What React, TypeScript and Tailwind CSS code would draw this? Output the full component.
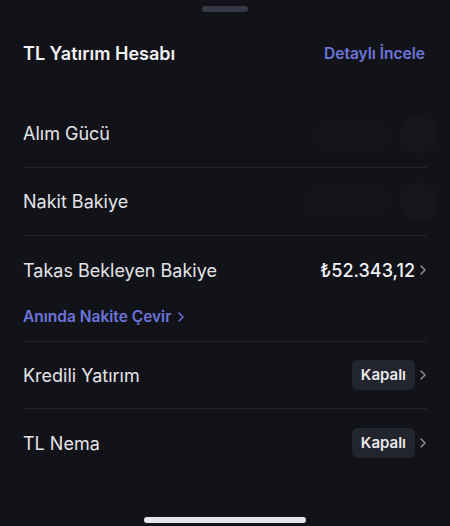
import React from 'react';

const Chevron = () => (
  <svg width="8" height="12" viewBox="0 0 8 12" fill="none" className="ml-1 shrink-0">
    <path d="M2 2l4 4-4 4" stroke="#8b8d97" strokeWidth="1.5" strokeLinecap="round" strokeLinejoin="round" />
  </svg>
);

// masked amount, almost invisible in the screenshot
const HiddenValue = ({ width }: { width: number }) => (
  <div className="-mr-[12px] flex items-center gap-3">
    <div className="h-[30px] rounded-md bg-white/[0.012] blur-[3px]" style={{ width }} />
    <div className="h-[38px] w-[40px] rounded-full bg-white/[0.018] blur-[3px]" />
  </div>
);

const Pill = () => (
  <div className="flex items-center">
    <span className="rounded-md bg-[#23252e] px-[9px] py-[4px] text-[15px] font-semibold text-[#e8e8ec]">Kapalı</span>
    <Chevron />
  </div>
);

export default function App() {
  const rowLabel = 'text-[18px] text-[#e4e4e8]';

  return (
    <div className="h-[526px] w-[450px] overflow-hidden bg-[#121318]" style={{ fontFamily: 'Inter, "Noto Sans", sans-serif' }}>
      <div className="flex h-full flex-col rounded-t-[18px] bg-[#121318]">
        {/* handle */}
        <div className="flex justify-center pt-[6px]">
          <div className="h-[6px] w-[46px] rounded-full bg-[#363845]" />
        </div>

        {/* header */}
        <div className="mt-[28px] flex h-[27px] items-center justify-between pl-[23px] pr-[25px]">
          <h1 className="text-[18px] font-semibold text-[#f1f1f4]">TL Yatırım Hesabı</h1>
          <span className="text-[15.5px] font-semibold text-[#6c74dc]">Detaylı İncele</span>
        </div>

        <div className="mt-[33px] pl-[23px] pr-[23px]">
          {/* Alım Gücü */}
          <div className="flex h-[68px] items-center justify-between border-b border-[#23242b]">
            <span className={rowLabel}>Alım Gücü</span>
            <HiddenValue width={70} />
          </div>

          {/* Nakit Bakiye */}
          <div className="flex h-[68px] items-center justify-between border-b border-[#23242b]">
            <span className={rowLabel}>Nakit Bakiye</span>
            <HiddenValue width={80} />
          </div>

          {/* Takas Bekleyen Bakiye */}
          <div className="border-b border-[#23242b]">
            <div className="flex h-[68px] items-center justify-between">
              <span className={rowLabel}>Takas Bekleyen Bakiye</span>
              <div className="flex items-center">
                <span className="text-[18px] font-medium text-[#f1f1f4]">₺52.343,12</span>
                <Chevron />
              </div>
            </div>
            <div className="flex h-[37px] items-start pt-[1px]">
              <span className="flex items-center text-[15.5px] font-semibold text-[#6c74dc]">
                Anında Nakite Çevir
                <svg width="8" height="12" viewBox="0 0 8 12" fill="none" className="ml-[6px]">
                  <path d="M2 2l4 4-4 4" stroke="#6c74dc" strokeWidth="1.5" strokeLinecap="round" strokeLinejoin="round" />
                </svg>
              </span>
            </div>
          </div>

          {/* Kredili Yatırım */}
          <div className="flex h-[67px] items-center justify-between border-b border-[#23242b]">
            <span className={rowLabel}>Kredili Yatırım</span>
            <Pill />
          </div>

          {/* TL Nema */}
          <div className="flex h-[68px] items-center justify-between">
            <span className={rowLabel}>TL Nema</span>
            <Pill />
          </div>
        </div>

        <div className="mt-auto flex justify-center pb-[3px]">
          <div className="h-[6px] w-[162px] rounded-full bg-[#e6e6ec]" />
        </div>
      </div>
    </div>
  );
}
